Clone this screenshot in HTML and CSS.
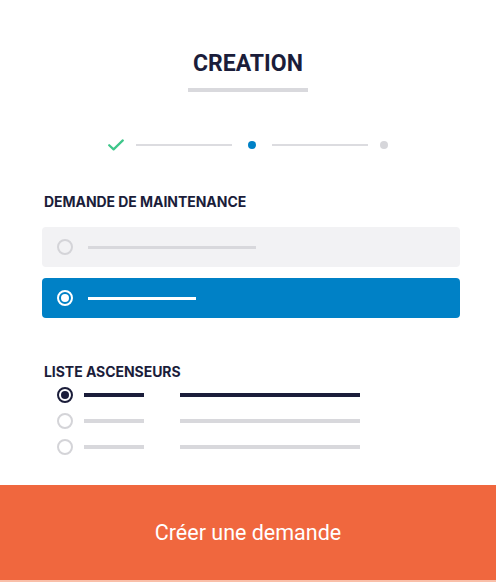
FILE: index.html
```html
<!DOCTYPE html>
<html lang="fr">
<head>
<meta charset="utf-8">
<title>Création</title>
<link rel="stylesheet" href="styles.css">
</head>
<body>
<div class="page">
  <main class="content">
    <header class="header">
      <h1 class="title">CREATION</h1>
      <div class="title-bar"></div>
    </header>

    <div class="stepper">
      <svg class="step-check" width="16" height="12" viewBox="0 0 16 12"><path d="M1.2 6.2 L5.6 10.4 L14.8 1.4" fill="none" stroke="#3ec68a" stroke-width="2.2" stroke-linecap="round" stroke-linejoin="round"/></svg>
      <span class="step-line step-line-a"></span>
      <span class="step-dot step-dot-active"></span>
      <span class="step-line step-line-b"></span>
      <span class="step-dot"></span>
    </div>

    <section class="section">
      <h2 class="label label-first">DEMANDE DE MAINTENANCE</h2>
      <div class="cards">
        <div class="card">
          <span class="radio"></span>
          <span class="bar bar-card-gray"></span>
        </div>
        <div class="card card-selected">
          <span class="radio radio-white"></span>
          <span class="bar bar-card-white"></span>
        </div>
      </div>
    </section>

    <section class="section">
      <h2 class="label label-second">LISTE ASCENSEURS</h2>
      <div class="list">
        <div class="row">
          <span class="radio radio-dark"></span>
          <span class="bar bar-short bar-dark"></span>
          <span class="bar bar-long bar-dark"></span>
        </div>
        <div class="row">
          <span class="radio"></span>
          <span class="bar bar-short"></span>
          <span class="bar bar-long"></span>
        </div>
        <div class="row">
          <span class="radio"></span>
          <span class="bar bar-short"></span>
          <span class="bar bar-long"></span>
        </div>
      </div>
    </section>
  </main>

  <button class="cta" type="button">Créer une demande</button>
</div>
</body>
</html>
```

FILE: styles.css
```css
* { box-sizing: border-box; }

html, body {
  margin: 0;
  padding: 0;
  background: #ffffff;
}

.page {
  min-height: 100vh;
  display: flex;
  flex-direction: column;
  font-family: Roboto, "Liberation Sans", sans-serif;
}

.content {
  padding: 0;
}

.header {
  display: flex;
  flex-direction: column;
  align-items: center;
  padding-top: 50px;
}

.title {
  margin: 0;
  font-family: Roboto, "Liberation Sans", sans-serif;
  font-weight: 700;
  font-size: 23px;
  line-height: 27px;
  color: #1b1d3a;
}

.title-bar {
  width: 120px;
  height: 4px;
  background: #d9d9dd;
  margin-top: 11px;
}

.stepper {
  display: flex;
  align-items: center;
  justify-content: center;
  height: 12px;
  margin-top: 47px;
}

.step-check { display: block; flex: none; }

.step-line {
  width: 96px;
  height: 2px;
  background: #dcdce0;
}
.step-line-a { margin: 0 16px 0 12px; }
.step-line-b { margin: 0 12px 0 16px; }

.step-dot {
  width: 8px;
  height: 8px;
  border-radius: 50%;
  background: #d6d6da;
}
.step-dot-active { background: #0081c6; }

.section {
  padding: 0 36px 0 42px;
}

.label {
  margin: 0;
  font-family: Inter, "Noto Sans", sans-serif;
  font-weight: 700;
  font-size: 14px;
  line-height: 18px;
  color: #1b1d3a;
  padding-left: 2px;
  letter-spacing: -0.05px;
}
.label-first { margin-top: 42px; }
.label-second { margin-top: 45px; }

.cards {
  display: flex;
  flex-direction: column;
  gap: 11px;
  margin-top: 16px;
}

.card {
  height: 40px;
  border-radius: 4px;
  background: #f2f2f4;
  display: flex;
  align-items: center;
  padding-left: 15px;
  gap: 15px;
}
.card-selected { background: #0081c6; }

.radio {
  position: relative;
  flex: none;
  width: 16px;
  height: 16px;
  border-radius: 50%;
  border: 2px solid #d4d4d8;
}
.radio-white { border-color: #ffffff; }
.radio-white::after,
.radio-dark::after {
  content: "";
  position: absolute;
  left: 2px;
  top: 2px;
  width: 8px;
  height: 8px;
  border-radius: 50%;
  background: #ffffff;
}
.radio-dark { border-color: #1b1d3a; }
.radio-dark::after { background: #1b1d3a; }

.bar {
  display: block;
  height: 3px;
  background: #d8d8dc;
}
.bar-card-gray { width: 168px; }
.bar-card-white { width: 108px; background: #ffffff; }

.list {
  display: flex;
  flex-direction: column;
  gap: 10px;
  margin-top: 6px;
}

.row {
  display: flex;
  align-items: center;
  height: 16px;
  padding-left: 15px;
}
.row .radio { margin-right: 11px; }
.bar-short { width: 60px; height: 4px; margin-right: 36px; }
.bar-long { width: 180px; height: 4px; }
.bar-dark { background: #1b1d3a; }

.cta {
  margin-top: auto;
  width: 100%;
  height: 97px;
  border: 0;
  border-bottom: 2px solid #f9bfa9;
  background: #f0673e;
  color: #ffffff;
  font-family: Roboto, "Liberation Sans", sans-serif;
  font-size: 21.5px;
  font-weight: 400;
  padding: 0;
  cursor: pointer;
}
```
